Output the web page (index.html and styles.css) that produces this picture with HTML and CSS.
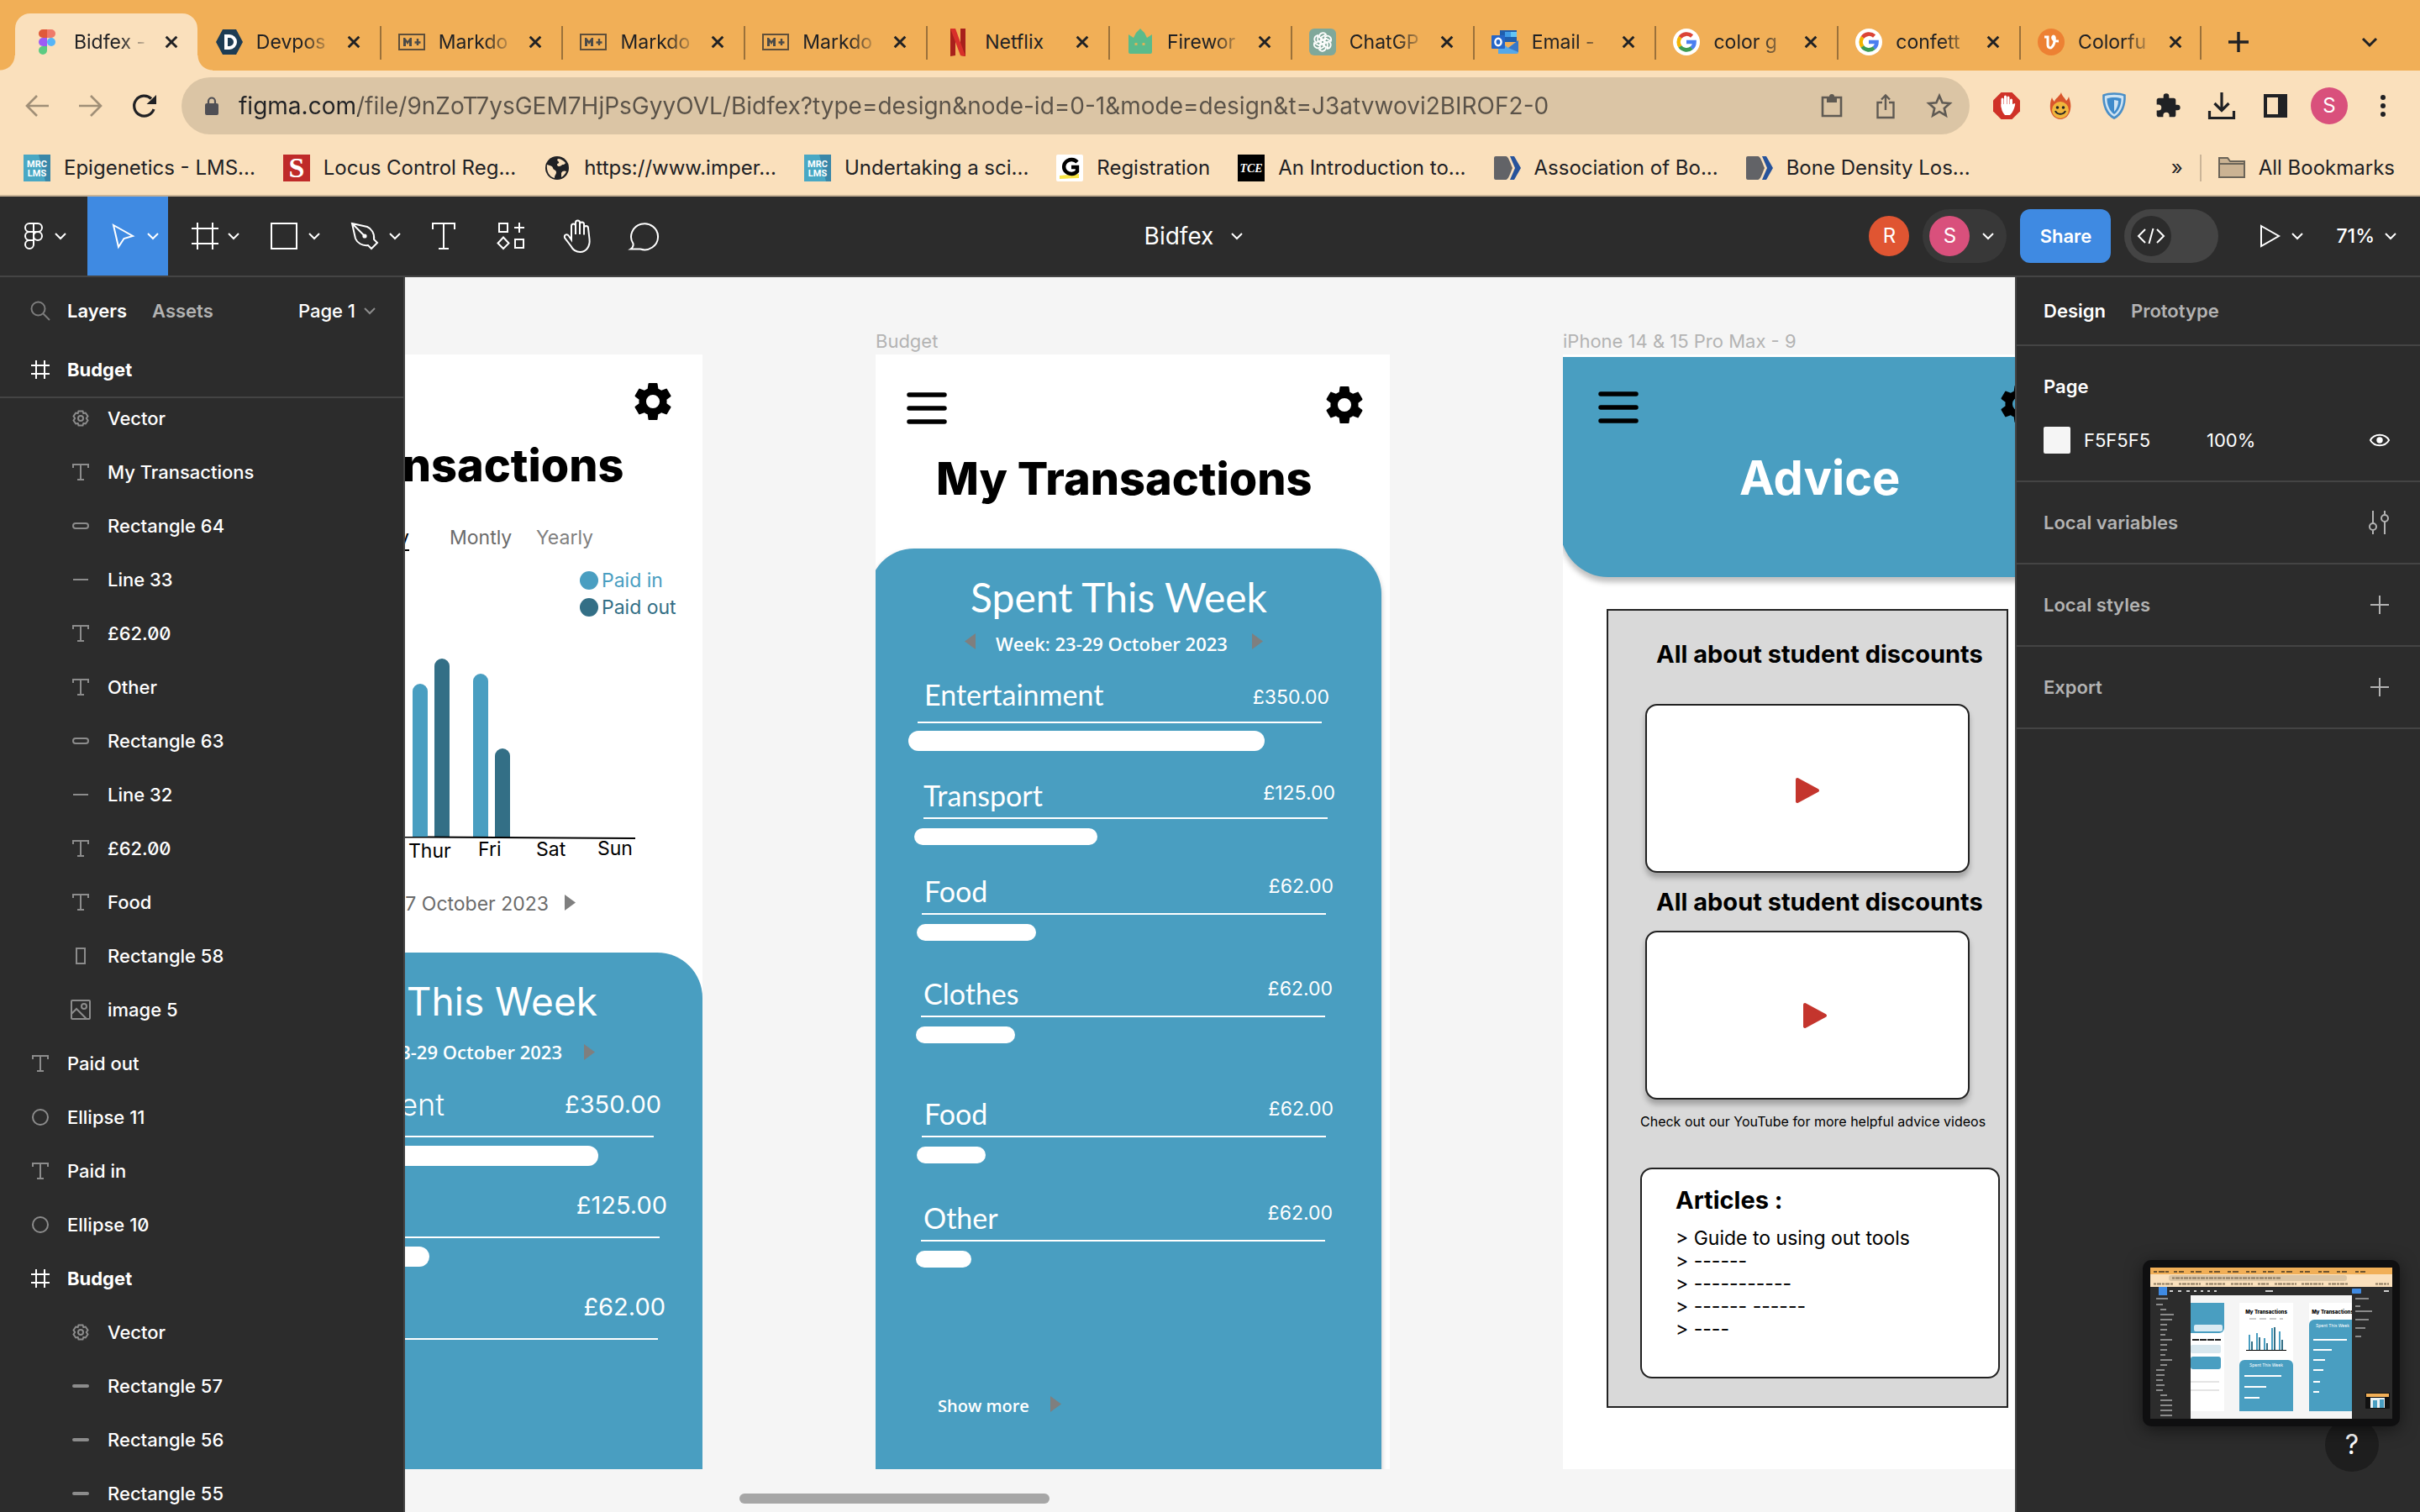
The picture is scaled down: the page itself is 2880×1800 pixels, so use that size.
FILE: index.html
```html
<!DOCTYPE html>
<html lang="en">
<head>
<meta charset="utf-8">
<title>Bidfex - Figma</title>
<link rel="stylesheet" href="styles.css">
</head>
<body>

<svg class="sprite" aria-hidden="true">
  <symbol id="chev" viewBox="0 0 16 16"><path d="M2 5l6 6 6-6" fill="none" stroke="currentColor" stroke-width="2"/></symbol>
  <symbol id="close" viewBox="0 0 20 20"><path d="M3 3l14 14M17 3L3 17" fill="none" stroke="currentColor" stroke-width="3.2"/></symbol>
  <symbol id="md" viewBox="0 0 32 32"><rect x="1" y="7" width="30" height="18" fill="none" stroke="#5f4f3a" stroke-width="2"/><path d="M6 21V11h2l3 4 3-4h2v10h-3v-5l-2 3-2-3v5z" fill="#4a4a48"/><path d="M23 12v8M19.500 16.500h7" stroke="#4a4a48" stroke-width="2.400" fill="none"/></symbol>
  <symbol id="google" viewBox="0 0 32 32"><circle cx="16" cy="16" r="16" fill="#fff"/><path d="M8.500 10.500A9.500 9.500 0 0 1 22.600 9" fill="none" stroke="#db4437" stroke-width="4.600"/><path d="M8.600 10.300a9.500 9.500 0 0 0 0 11.400" fill="none" stroke="#f4b400" stroke-width="4.600"/><path d="M8.400 21.500a9.500 9.500 0 0 0 14 1.500" fill="none" stroke="#3f9c53" stroke-width="4.600"/><path d="M16 16h9.500c0 3-1.200 5.500-3.200 7.200" fill="none" stroke="#4c7ff0" stroke-width="4.600"/></symbol>
  <symbol id="mrc" viewBox="0 0 32 32"><rect width="32" height="32" fill="#49a8c4"/><path d="M18 0h14v32h-6z" fill="#3a87a8"/><text x="16" y="15" text-anchor="middle" class="mrc-text">MRC</text><text x="16" y="26" text-anchor="middle" class="mrc-text">LMS</text></symbol>
  <symbol id="tag" viewBox="0 0 32 32"><path d="M2 2h12c3 0 5 7 8 14-3 7-5 14-8 14H2a2 2 0 0 1-2-2V4a2 2 0 0 1 2-2z" fill="#626367"/><path d="M19 2h5l8 14-8 14h-5l6-14z" fill="#27539b"/></symbol>
  <symbol id="gear" viewBox="2 2 20 20"><path d="M19.140 12.940c.04-.3.060-.61.060-.94 0-.32-.02-.64-.07-.94l2.030-1.580a.49.49 0 0 0 .12-.61l-1.920-3.320a.49.49 0 0 0-.59-.22l-2.390.96c-.5-.38-1.030-.7-1.620-.94l-.36-2.540A.48.48 0 0 0 13.920 2.400h-3.840c-.24 0-.43.17-.47.41l-.36 2.540c-.59.24-1.130.57-1.620.94l-2.390-.96c-.22-.08-.47 0-.59.22L2.740 8.870c-.12.21-.08.47.12.61l2.030 1.580c-.05.3-.09.63-.09.94s.02.64.07.94l-2.030 1.580a.49.49 0 0 0-.12.61l1.920 3.320c.12.22.37.29.59.22l2.390-.96c.5.38 1.030.7 1.620.94l.36 2.540c.05.24.24.41.48.41h3.840c.24 0 .44-.17.47-.41l.36-2.540c.59-.24 1.130-.56 1.620-.94l2.390.96c.22.08.47 0 .59-.22l1.920-3.320c.12-.22.07-.47-.12-.61zM12 15.500a3.500 3.500 0 1 1 0-7 3.500 3.500 0 0 1 0 7z"/></symbol>
  <symbol id="burger" viewBox="0 0 48 38"><path d="M3 3h42M3 19h42M3 35h42" stroke="currentColor" stroke-width="5.500" stroke-linecap="round"/></symbol>
  <symbol id="tri" viewBox="0 0 13 19"><path d="M0 0l13 9.500L0 19z" fill="currentColor"/></symbol>
  <symbol id="play" viewBox="0 0 30 32"><path d="M3 3l24 13L3 29z" fill="#c4352d" stroke="#c4352d" stroke-width="4" stroke-linejoin="round"/></symbol>
  <symbol id="l-frame" viewBox="0 0 24 24"><path d="M7 1v22M17 1v22M1 7h22M1 17h22" fill="none" stroke="currentColor" stroke-width="2"/></symbol>
  <symbol id="l-text" viewBox="0 0 24 24"><path d="M3 7V3h18v4M12 3v18M8 21h8" fill="none" stroke="currentColor" stroke-width="2"/></symbol>
  <symbol id="l-vector" viewBox="0 0 24 24"><path d="M9.500 3.500h5l.8 2.500 2.500-.5 2.700 4-1.700 2.500 1.700 2.500-2.700 4-2.500-.5-.8 2.500h-5L8.700 18l-2.500.5-2.700-4L5.200 12 3.500 9.500l2.700-4 2.500.5z" fill="none" stroke="currentColor" stroke-width="2"/><circle cx="12" cy="12" r="3" fill="none" stroke="currentColor" stroke-width="2"/></symbol>
  <symbol id="l-pill" viewBox="0 0 24 24"><rect x="3" y="9" width="18" height="6" rx="3" fill="none" stroke="currentColor" stroke-width="2"/></symbol>
  <symbol id="l-thin" viewBox="0 0 24 24"><rect x="2" y="10" width="20" height="4" rx="2" fill="currentColor"/></symbol>
  <symbol id="l-line" viewBox="0 0 24 24"><path d="M3 12h18" stroke="currentColor" stroke-width="2"/></symbol>
  <symbol id="l-rect" viewBox="0 0 24 24"><rect x="7" y="3" width="10" height="18" fill="none" stroke="currentColor" stroke-width="2"/></symbol>
  <symbol id="l-image" viewBox="0 0 24 24"><rect x="1" y="1" width="22" height="22" rx="1" fill="none" stroke="currentColor" stroke-width="2"/><circle cx="16" cy="8" r="3" fill="none" stroke="currentColor" stroke-width="2"/><path d="M1 17l6-6 12 12" fill="none" stroke="currentColor" stroke-width="2"/></symbol>
  <symbol id="l-ellipse" viewBox="0 0 24 24"><circle cx="12" cy="12" r="9" fill="none" stroke="currentColor" stroke-width="2"/></symbol>
  <symbol id="plus" viewBox="0 0 24 24"><path d="M12 1v22M1 12h22" fill="none" stroke="currentColor" stroke-width="2"/></symbol>
</svg>

<header class="browser">
  <div class="tabstrip">
    <ul class="tabs">
      <li class="tab tab--active">
        <svg class="favicon" viewBox="0 0 32 32"><path d="M16 1h-5a5 5 0 0 0 0 10h5z" fill="#e0593a"/><path d="M16 1h5a5 5 0 0 1 0 10h-5z" fill="#ef7a6a"/><path d="M16 11h-5a5 5 0 0 0 0 10h5z" fill="#9d5cf5"/><circle cx="21" cy="16" r="5" fill="#55b5f8"/><path d="M16 21h-5a5 5 0 1 0 5 5z" fill="#5bcb82"/></svg>
        <a class="tab-label" href="#">Bidfex -</a><button class="tab-close" aria-label="Close tab"><svg><use href="#close"/></svg></button></li>
      <li class="tab tab--first">
        <svg class="favicon" viewBox="0 0 32 32"><path d="M8 1h16l8 15-8 15H8L0 16z" fill="#1d3c54"/><path d="M12 9h4a7 7 0 0 1 0 14h-4z" fill="none" stroke="#fff" stroke-width="4"/></svg>
        <a class="tab-label" href="#">Devpos</a><button class="tab-close" aria-label="Close tab"><svg><use href="#close"/></svg></button></li>
      <li class="tab"><svg class="favicon"><use href="#md"/></svg><a class="tab-label" href="#">Markdo</a><button class="tab-close" aria-label="Close tab"><svg><use href="#close"/></svg></button></li>
      <li class="tab"><svg class="favicon"><use href="#md"/></svg><a class="tab-label" href="#">Markdo</a><button class="tab-close" aria-label="Close tab"><svg><use href="#close"/></svg></button></li>
      <li class="tab"><svg class="favicon"><use href="#md"/></svg><a class="tab-label" href="#">Markdo</a><button class="tab-close" aria-label="Close tab"><svg><use href="#close"/></svg></button></li>
      <li class="tab">
        <svg class="favicon" viewBox="0 0 32 32"><path d="M7 0h6v32l-6 1zM19 0h6v33l-6-1z" fill="#a8201c"/><path d="M7 0h6l12 33-6-1z" fill="#d8302a"/></svg>
        <a class="tab-label tab-label--whole" href="#">Netflix</a><button class="tab-close" aria-label="Close tab"><svg><use href="#close"/></svg></button></li>
      <li class="tab">
        <svg class="favicon" viewBox="0 0 32 32"><path d="M2 7l6 4 3-6 5-5 5 5 3 6 6-4v21a2 2 0 0 1-2 2H4a2 2 0 0 1-2-2z" fill="#5abb8b"/><path d="M11 17v3M20 17v3" stroke="#d9b45a" stroke-width="3"/></svg>
        <a class="tab-label" href="#">Firewor</a><button class="tab-close" aria-label="Close tab"><svg><use href="#close"/></svg></button></li>
      <li class="tab">
        <svg class="favicon" viewBox="0 0 32 32"><rect width="32" height="32" rx="6" fill="#80a89a"/><g fill="none" stroke="#fff" stroke-width="1.800"><path id="petal" d="M16 12.500l-4-2.300V9a4.500 4.500 0 0 1 8-2l-6 3.500v7"/><use href="#petal" transform="rotate(60 16 16)"/><use href="#petal" transform="rotate(120 16 16)"/><use href="#petal" transform="rotate(180 16 16)"/><use href="#petal" transform="rotate(240 16 16)"/><use href="#petal" transform="rotate(300 16 16)"/></g></svg>
        <a class="tab-label" href="#">ChatGP</a><button class="tab-close" aria-label="Close tab"><svg><use href="#close"/></svg></button></li>
      <li class="tab">
        <svg class="favicon" viewBox="0 0 32 32"><path d="M10 2h20v14H10z" fill="#1f5fae"/><path d="M16 4h7v6h-7z" fill="#3f9be6"/><path d="M23 4h7v6h-7z" fill="#62c4f5"/><path d="M8 14l12 9 12-9v14a2 2 0 0 1-2 2H8z" fill="#55a8ea"/><path d="M20 23l12-9v14z" fill="#3878c8"/><rect y="8" width="16" height="16" rx="1" fill="#2566c8"/><ellipse cx="8" cy="16" rx="3.600" ry="4.200" fill="none" stroke="#fff" stroke-width="2.400"/></svg>
        <a class="tab-label" href="#">Email -</a><button class="tab-close" aria-label="Close tab"><svg><use href="#close"/></svg></button></li>
      <li class="tab"><svg class="favicon"><use href="#google"/></svg><a class="tab-label" href="#">color g</a><button class="tab-close" aria-label="Close tab"><svg><use href="#close"/></svg></button></li>
      <li class="tab"><svg class="favicon"><use href="#google"/></svg><a class="tab-label" href="#">confett</a><button class="tab-close" aria-label="Close tab"><svg><use href="#close"/></svg></button></li>
      <li class="tab tab--last">
        <svg class="favicon" viewBox="0 0 32 32"><circle cx="16" cy="16" r="16" fill="#ed8133"/><path d="M8 10h4v9c0 4 3 5 5 3 4-4 4-13 2-13s-3 6 6 6" fill="none" stroke="#fff" stroke-width="3"/></svg>
        <a class="tab-label" href="#">Colorfu</a><button class="tab-close" aria-label="Close tab"><svg><use href="#close"/></svg></button></li>
    </ul>
    <div class="tabstrip-tools">
      <button class="strip-btn" aria-label="New tab"><svg viewBox="0 0 24 24"><path d="M12 0v24M0 12h24" stroke="currentColor" stroke-width="3.400"/></svg></button>
      <button class="strip-btn" aria-label="Search tabs"><svg viewBox="0 0 24 24"><path d="M4 8l8 8 8-8" fill="none" stroke="currentColor" stroke-width="3"/></svg></button>
    </div>
  </div>

  <div class="navbar">
    <button class="nav-btn nav-btn--off" aria-label="Back"><svg viewBox="0 0 32 32"><path d="M30 16H5M16 4L4 16l12 12" fill="none" stroke="currentColor" stroke-width="2.600"/></svg></button>
    <button class="nav-btn nav-btn--off" aria-label="Forward"><svg viewBox="0 0 32 32"><path d="M2 16h25M16 4l12 12-12 12" fill="none" stroke="currentColor" stroke-width="2.600"/></svg></button>
    <button class="nav-btn" aria-label="Reload"><svg viewBox="0 0 32 32"><path d="M27 20a12 12 0 1 1-3-12.500" fill="none" stroke="currentColor" stroke-width="3.200"/><path d="M30 3v11H18.500z" fill="currentColor"/></svg></button>
    <div class="omnibox">
      <svg class="lock" viewBox="0 0 16 22"><rect y="8" width="16" height="14" rx="2" fill="#4f4f54"/><path d="M4 9V5.500a4 4 0 0 1 8 0V9" fill="none" stroke="#4f4f54" stroke-width="2.200"/></svg>
      <input class="url" type="text" aria-label="Address" value="figma.com/file/9nZoT7ysGEM7HjPsGyyOVL/Bidfex?type=design&amp;node-id=0-1&amp;mode=design&amp;t=J3atvwovi2BIROF2-0">
      <button class="omni-btn" aria-label="Clipboard"><svg viewBox="0 0 32 32"><path d="M5 6h22v22H5z" fill="none" stroke="currentColor" stroke-width="2.600"/><path d="M10 5h3a3 3 0 0 1 6 0h3v7H10z" fill="currentColor"/></svg></button>
      <button class="omni-btn" aria-label="Share"><svg viewBox="0 0 32 32"><path d="M12 12H6.500v18h19V12H20M16 21V4M11 8.500l5-5 5 5" fill="none" stroke="currentColor" stroke-width="2.400"/></svg></button>
      <button class="omni-btn" aria-label="Bookmark"><svg viewBox="0 0 32 32"><path d="M16 4l3.600 8.200 8.900.8-6.700 5.900 2 8.700L16 23l-7.800 4.600 2-8.700L3.500 13l8.900-.8z" fill="none" stroke="currentColor" stroke-width="2.600"/></svg></button>
    </div>
    <div class="extensions">
      <button class="nav-btn" aria-label="AdBlock"><svg viewBox="0 0 32 32"><path d="M9.500 0h13L32 9.500v13L22.500 32h-13L0 22.500v-13z" fill="#cf3127"/><path d="M11 17V8M14.500 16V5M18 16V6M21.500 17V9" stroke="#fff" stroke-width="3" stroke-linecap="round"/><path d="M9.500 14h13.500l3-1c1 1-2 11-6 14h-6c-3-3-4.500-7-4.500-13z" fill="#fff"/></svg></button>
      <button class="nav-btn" aria-label="Flame"><svg viewBox="0 0 32 32"><path d="M17 0c1 5 5 7 6 10 1-1 2-2 3-5 2 6 3 10 2 15-1 7-6 12-12 12S5 27 4 20c-.500-5 0-10 2-14 1 3 2 4 3 5 1-4 6-6 8-11z" fill="#d9562c"/><circle cx="16" cy="21" r="10" fill="#f0b63c"/><circle cx="12.500" cy="18" r="1.800" fill="#222"/><circle cx="19.500" cy="18" r="1.800" fill="#222"/><path d="M10 22c2 5 10 5 12 0" fill="none" stroke="#222" stroke-width="2"/></svg></button>
      <button class="nav-btn" aria-label="Shield"><svg viewBox="0 0 32 32"><path d="M16 1.500c5 0 9 .5 12.500 2C29 15 25 26 16 30.500 7 26 3 15 3.500 3.500 7 2 11 1.500 16 1.500z" fill="#cfe4f3" stroke="#4a8fc7" stroke-width="2.600"/><path d="M16 6c3 0 6 .4 8.500 1.200C24.500 15 21.500 22 16 26 10.500 22 7.500 15 7.500 7.200 10 6.400 13 6 16 6z" fill="#3f8bcb"/><path d="M16 9l5 1c0 5-2 10-5 13z" fill="#cfe4f3"/></svg></button>
      <button class="nav-btn" aria-label="Extensions"><svg viewBox="0 0 24 24"><path d="M20.500 11H19V7a2 2 0 0 0-2-2h-4V3.500a2.500 2.500 0 0 0-5 0V5H4a2 2 0 0 0-2 2v3.800h1.500a2.700 2.700 0 0 1 0 5.400H2V20c0 1.100.9 2 2 2h3.800v-1.500a2.700 2.700 0 0 1 5.400 0V22H17a2 2 0 0 0 2-2v-4h1.500a2.500 2.500 0 0 0 0-5z" fill="currentColor"/></svg></button>
      <button class="nav-btn" aria-label="Downloads"><svg viewBox="0 0 32 32"><path d="M16 0v20M7.500 13l8.500 8.500L24.500 13M1.500 22v8.500h29V22" fill="none" stroke="currentColor" stroke-width="3.200"/></svg></button>
      <button class="nav-btn" aria-label="Side panel"><svg viewBox="0 0 32 32"><path d="M2 2h28v28H2zM6 6v20h13V6z" fill="currentColor" fill-rule="evenodd"/></svg></button>
      <button class="profile" aria-label="Profile">S</button>
      <button class="nav-btn" aria-label="Menu"><svg viewBox="0 0 32 32"><circle cx="16" cy="6" r="3" fill="currentColor"/><circle cx="16" cy="16" r="3" fill="currentColor"/><circle cx="16" cy="26" r="3" fill="currentColor"/></svg></button>
    </div>
  </div>

  <nav class="bookmarks">
    <a class="bookmark" href="#"><svg><use href="#mrc"/></svg>Epigenetics - LMS...</a>
    <a class="bookmark" href="#"><svg viewBox="0 0 32 32"><rect width="32" height="32" fill="#bf2a29"/><text x="16" y="27" text-anchor="middle" class="serif-s">S</text></svg>Locus Control Reg...</a>
    <a class="bookmark" href="#"><svg viewBox="0 0 32 32"><circle cx="16" cy="16" r="14" fill="#202124"/><path d="M4 12c5 2 6 1 7 4s4 2 4 5-2 3-2 7c-6-1-10-8-9-16zM17 5c3 0 7 2 9 5-2 3-3 1-5 3s-5 1-5-1 3-1 2-3-3-2-1-4zM21 22c1-3 4-3 6-2-1 3-4 6-6 7z" fill="#f9e0bd"/></svg>https://www.imper...</a>
    <a class="bookmark" href="#"><svg><use href="#mrc"/></svg>Undertaking a sci...</a>
    <a class="bookmark" href="#"><svg viewBox="0 0 32 32"><rect width="32" height="32" rx="2" fill="#fff"/><path d="M4 25l23-2v5L4 29z" fill="#f7e545"/><path d="M25 9a9 8.500 0 1 0 0 11v-5h-7" fill="none" stroke="#000" stroke-width="4.400"/></svg>Registration</a>
    <a class="bookmark" href="#"><svg viewBox="0 0 32 32"><rect width="32" height="32" fill="#000"/><text x="16" y="21" text-anchor="middle" class="tce-text">TCE</text></svg>An Introduction to...</a>
    <a class="bookmark" href="#"><svg><use href="#tag"/></svg>Association of Bo...</a>
    <a class="bookmark" href="#"><svg><use href="#tag"/></svg>Bone Density Los...</a>
    <div class="bookmarks-end">
      <button class="more" aria-label="More bookmarks">»</button>
      <a class="bookmark all" href="#"><svg viewBox="0 0 32 32"><path d="M1 27V4h10l3 4h17v19z" fill="#cbb393" stroke="#6b6458" stroke-width="2"/><path d="M1 11h30" stroke="#6b6458" stroke-width="2"/></svg>All Bookmarks</a>
    </div>
  </nav>
</header>

<div class="appbar">
  <div class="tools">
    <button class="tool tool--menu" aria-label="Main menu"><svg class="tool-icon" viewBox="0 0 32 32"><path d="M16 1h-5a5 5 0 0 0 0 10h10a5 5 0 0 0 0-10h-5zv25a5 5 0 1 1-5-5h5M11 11a5 5 0 0 0 0 10h5" fill="none" stroke="currentColor" stroke-width="2"/><circle cx="21" cy="16" r="5" fill="none" stroke="currentColor" stroke-width="2"/></svg><svg class="chev"><use href="#chev"/></svg></button>
    <button class="tool tool--on" aria-label="Move"><svg class="tool-icon" viewBox="0 0 32 32"><path d="M3 3l23 13-10.500 3L9 29z" fill="none" stroke="currentColor" stroke-width="2"/></svg><svg class="chev"><use href="#chev"/></svg></button>
    <button class="tool" aria-label="Frame"><svg class="tool-icon" viewBox="0 0 32 32"><path d="M7 0v32M25 0v32M0 7h32M0 25h32" fill="none" stroke="currentColor" stroke-width="2"/></svg><svg class="chev"><use href="#chev"/></svg></button>
    <button class="tool" aria-label="Rectangle"><svg class="tool-icon" viewBox="0 0 32 32"><path d="M-1 1h30v30H-1z" fill="none" stroke="currentColor" stroke-width="2"/></svg><svg class="chev"><use href="#chev"/></svg></button>
    <button class="tool" aria-label="Pen"><svg class="tool-icon" viewBox="0 0 32 32"><path d="M-1 1l18 4c5 2 9 8 8 15l4 4-7 7-4-4c-7 1-13-3-15-8zM-1 1l14 14" fill="none" stroke="currentColor" stroke-width="2"/><circle cx="14" cy="16" r="2.600" fill="currentColor"/></svg><svg class="chev"><use href="#chev"/></svg></button>
    <button class="tool tool--single" aria-label="Text"><svg class="tool-icon" viewBox="0 0 32 32"><path d="M3 8V1h26v7M16 1v30M10 31h12" fill="none" stroke="currentColor" stroke-width="2"/></svg></button>
    <button class="tool tool--single" aria-label="Resources"><svg class="tool-icon" viewBox="0 0 32 32"><path d="M2 1h10v10H2zM21 20h10v10H21zM26 0v12M20 6h12M7 17.500l6.500 7-6.500 6.500-6.500-6.500z" fill="none" stroke="currentColor" stroke-width="2"/></svg></button>
    <button class="tool tool--single" aria-label="Hand"><svg class="tool-icon tool-icon--big" viewBox="0 0 40 40"><path d="M12 21V8a2.500 2.500 0 0 1 5 0v10V4a2.500 2.500 0 0 1 5 0v14V6a2.500 2.500 0 0 1 5 0v12.500-8a2.500 2.500 0 0 1 5 0l1.500 13c1 9-4 15.500-11 15.500-6 0-9-3-11-7L4 22c-1-4 3-5 5-2l3 4.500z" fill="none" stroke="currentColor" stroke-width="2"/></svg></button>
    <button class="tool tool--single" aria-label="Comment"><svg class="tool-icon tool-icon--big" viewBox="0 0 40 40"><path d="M2.500 35.500c3-2 3.500-4 3-6.500A16 15.500 0 1 1 14 35.500z" fill="none" stroke="currentColor" stroke-width="2"/></svg></button>
  </div>
  <button class="file-name">Bidfex<svg class="chev"><use href="#chev"/></svg></button>
  <div class="app-actions">
    <span class="avatar avatar--r">R</span>
    <button class="me"><span class="avatar avatar--s">S</span><svg class="chev"><use href="#chev"/></svg></button>
    <button class="share">Share</button>
    <label class="devmode"><input type="checkbox" role="switch" aria-label="Dev Mode"><span class="knob"><svg viewBox="0 0 32 24"><path d="M9 4l-8 8 8 8M23 4l8 8-8 8M18.500 3l-5 18" fill="none" stroke="currentColor" stroke-width="2"/></svg></span></label>
    <button class="present" aria-label="Present"><svg class="play-icon" viewBox="0 0 24 28"><path d="M1 2l21 12L1 26z" fill="none" stroke="currentColor" stroke-width="2"/></svg><svg class="chev"><use href="#chev"/></svg></button>
    <button class="zoom">71%<svg class="chev"><use href="#chev"/></svg></button>
  </div>
</div>

<main class="workspace">
  <aside class="layers">
    <div class="layers-head">
      <button class="icon-btn" aria-label="Search layers"><svg viewBox="0 0 24 24"><circle cx="9.500" cy="9.500" r="8" fill="none" stroke="currentColor" stroke-width="2"/><path d="M15.500 15.500L23 23" stroke="currentColor" stroke-width="2"/></svg></button>
      <button class="ptab ptab--on">Layers</button>
      <button class="ptab">Assets</button>
      <button class="page-pick">Page 1<svg class="chev"><use href="#chev"/></svg></button>
    </div>
    <div class="layer layer--frame layer--sticky"><svg><use href="#l-frame"/></svg>Budget</div>
    <div class="layer-scroll">
      <ul class="layer-list">
        <li class="layer layer--child"><svg><use href="#l-vector"/></svg>Vector</li>
        <li class="layer layer--child"><svg><use href="#l-text"/></svg>My Transactions</li>
        <li class="layer layer--child"><svg><use href="#l-pill"/></svg>Rectangle 64</li>
        <li class="layer layer--child"><svg><use href="#l-line"/></svg>Line 33</li>
        <li class="layer layer--child"><svg><use href="#l-text"/></svg>£62.00</li>
        <li class="layer layer--child"><svg><use href="#l-text"/></svg>Other</li>
        <li class="layer layer--child"><svg><use href="#l-pill"/></svg>Rectangle 63</li>
        <li class="layer layer--child"><svg><use href="#l-line"/></svg>Line 32</li>
        <li class="layer layer--child"><svg><use href="#l-text"/></svg>£62.00</li>
        <li class="layer layer--child"><svg><use href="#l-text"/></svg>Food</li>
        <li class="layer layer--child"><svg><use href="#l-rect"/></svg>Rectangle 58</li>
        <li class="layer layer--child"><svg><use href="#l-image"/></svg>image 5</li>
        <li class="layer"><svg><use href="#l-text"/></svg>Paid out</li>
        <li class="layer"><svg><use href="#l-ellipse"/></svg>Ellipse 11</li>
        <li class="layer"><svg><use href="#l-text"/></svg>Paid in</li>
        <li class="layer"><svg><use href="#l-ellipse"/></svg>Ellipse 10</li>
        <li class="layer layer--frame"><svg><use href="#l-frame"/></svg>Budget</li>
        <li class="layer layer--child"><svg><use href="#l-vector"/></svg>Vector</li>
        <li class="layer layer--child"><svg><use href="#l-thin"/></svg>Rectangle 57</li>
        <li class="layer layer--child"><svg><use href="#l-thin"/></svg>Rectangle 56</li>
        <li class="layer layer--child"><svg><use href="#l-thin"/></svg>Rectangle 55</li>
      </ul>
    </div>
  </aside>

  <section class="canvas" aria-label="Canvas">
    <article class="frame" style="left:-258px;top:92px">
      <svg class="node gear" style="left:530px;top:33px"><use href="#gear"/></svg>
      <h2 class="node title" style="left:71px;top:98px">My Transactions</h2>
      <span class="node t23 underlined" style="right:349px;top:204px">Weekly</span>
      <span class="node t23 grey-dark" style="left:311px;top:204px">Montly</span>
      <span class="node t23 grey" style="left:414px;top:204px">Yearly</span>
      <ul class="node legend" style="left:466px;top:253px">
        <li class="legend-in">Paid in</li>
        <li class="legend-out">Paid out</li>
      </ul>
      <div class="node chart" style="left:267px;top:362px">
        <span class="col" style="height:183px"></span><span class="col col--out" style="height:213px"></span>
        <span class="col col--next" style="height:195px"></span><span class="col col--out" style="height:106px"></span>
      </div>
      <svg class="node axis" style="left:0;top:572px" viewBox="0 0 532 6"><path d="M0 1l532 3" stroke="#000" stroke-width="2"/></svg>
      <span class="node t23" style="left:262px;top:577px">Thur</span>
      <span class="node t23" style="left:345px;top:575px">Fri</span>
      <span class="node t23" style="left:414px;top:575px">Sat</span>
      <span class="node t23" style="left:487px;top:574px">Sun</span>
      <span class="node t23 grey-dark" style="right:183px;top:640px">Week: 21-27 October 2023</span>
      <svg class="node tri" style="left:448px;top:643px"><use href="#tri"/></svg>

      <div class="node panel panel--flush" style="top:712px">
        <h3 class="node panel-title--inter" style="right:125px;top:30px">Spent This Week</h3>
        <span class="node week" style="right:167px;top:104px">Week: 23-29 October 2023</span>
        <svg class="node tri" style="left:471px;top:109px"><use href="#tri"/></svg>
        <div class="node wide-row" style="right:58px;top:163px"><p>Entertainment <b>£350.00</b></p><hr><span class="fill fill--big" style="width:424px"></span></div>
        <div class="node wide-row" style="right:51px;top:283px"><p>Transport <b>£125.00</b></p><hr><span class="fill" style="width:216px"></span></div>
        <div class="node wide-row" style="right:53px;top:404px"><p>Food <b>£62.00</b></p><hr></div>
      </div>
    </article>

    <span class="frame-name" style="left:560px;top:62px">Budget</span>
    <article class="frame" style="left:560px;top:92px">
      <svg class="node burger" style="left:37px;top:45px"><use href="#burger"/></svg>
      <svg class="node gear" style="left:535px;top:37px"><use href="#gear"/></svg>
      <h2 class="node title" style="left:72px;top:114px">My Transactions</h2>
      <div class="node panel" style="left:-8px;top:231px">
        <h3 class="node panel-title" style="left:121px;top:30px">Spent This Week</h3>
        <svg class="node tri tri--left" style="left:114px;top:101px"><use href="#tri"/></svg>
        <span class="node week" style="left:151px;top:99px">Week: 23-29 October 2023</span>
        <svg class="node tri" style="left:456px;top:101px"><use href="#tri"/></svg>
        <ul class="spends">
          <li class="node spend spend--high" style="left:58px;top:150px"><p>Entertainment</p><b>£350.00</b><hr><span class="fill fill--big" style="width:424px"></span></li>
          <li class="node spend spend--second" style="left:65px;top:264px"><p>Transport</p><b>£125.00</b><hr><span class="fill" style="width:218px"></span></li>
          <li class="node spend" style="left:63px;top:378px"><p>Food</p><b>£62.00</b><hr><span class="fill" style="width:142px"></span></li>
          <li class="node spend" style="left:62px;top:500px"><p>Clothes</p><b>£62.00</b><hr><span class="fill" style="width:118px"></span></li>
          <li class="node spend" style="left:63px;top:643px"><p>Food</p><b>£62.00</b><hr><span class="fill" style="width:82px"></span></li>
          <li class="node spend" style="left:62px;top:767px"><p>Other</p><b>£62.00</b><hr><span class="fill" style="width:66px"></span></li>
        </ul>
        <span class="node week week--small" style="left:82px;top:1007px">Show more</span>
        <svg class="node tri" style="left:216px;top:1009px"><use href="#tri"/></svg>
      </div>
    </article>

    <span class="frame-name" style="left:1378px;top:62px">iPhone 14 &amp; 15 Pro Max - 9</span>
    <article class="frame" style="left:1378px;top:92px">
      <div class="node hero" style="left:-3px;top:3px"></div>
      <svg class="node burger" style="left:42px;top:44px"><use href="#burger"/></svg>
      <svg class="node gear" style="left:520px;top:36px"><use href="#gear"/></svg>
      <h2 class="node title title--light" style="left:210px;top:113px">Advice</h2>
      <div class="node board" style="left:52px;top:303px">
        <h4 class="node t29" style="left:57px;top:35px">All about student discounts</h4>
        <button class="node video" style="left:44px;top:111px" aria-label="Play video"><svg class="play"><use href="#play"/></svg></button>
        <h4 class="node t29" style="left:57px;top:330px">All about student discounts</h4>
        <button class="node video video--b" style="left:44px;top:381px" aria-label="Play video"><svg class="play"><use href="#play"/></svg></button>
        <p class="node t16" style="left:38px;top:598px">Check out our YouTube for more helpful advice videos</p>
        <div class="node articles" style="left:38px;top:663px">
          <h4 class="t29">Articles :</h4>
          <ul><li>&gt; Guide to using out tools</li><li>&gt; ------</li><li>&gt; -----------</li><li>&gt; ------ ------</li><li>&gt; ----</li></ul>
        </div>
      </div>
    </article>
    <div class="scroll-thumb"></div>
  </section>

  <aside class="inspector">
    <div class="insp-tabs"><button class="ptab ptab--on">Design</button><button class="ptab">Prototype</button></div>
    <section class="insp-page">
      <h3>Page</h3>
      <div class="fill-row">
        <button class="swatch" aria-label="Page colour"></button>
        <input class="hex" type="text" aria-label="Colour" value="F5F5F5">
        <input class="pct" type="text" aria-label="Opacity" value="100%">
        <button class="icon-btn icon-btn--white" aria-label="Toggle visibility"><svg viewBox="0 0 26 26"><path d="M1 13c5-9 19-9 24 0-5 9-19 9-24 0z" fill="none" stroke="currentColor" stroke-width="2"/><circle cx="13" cy="13" r="4" fill="currentColor"/></svg></button>
      </div>
    </section>
    <section class="insp-row"><h3>Local variables</h3><button class="icon-btn" aria-label="Open variables"><svg class="sliders" viewBox="0 0 26 28"><path d="M6 0v15M6 24v4M20 0v4M20 13v15" stroke="currentColor" stroke-width="2"/><circle cx="6" cy="19" r="4" fill="none" stroke="currentColor" stroke-width="2"/><circle cx="20" cy="9" r="4" fill="none" stroke="currentColor" stroke-width="2"/></svg></button></section>
    <section class="insp-row"><h3>Local styles</h3><button class="icon-btn" aria-label="Add style"><svg><use href="#plus"/></svg></button></section>
    <section class="insp-row"><h3>Export</h3><button class="icon-btn" aria-label="Add export"><svg><use href="#plus"/></svg></button></section>
  </aside>
</main>

<button class="help" aria-label="Help">?</button>
<div class="preview">
  <svg viewBox="0 0 288 180">
    <rect width="288" height="180" fill="#f5f5f5"/>
    <rect width="288" height="8" fill="#f1af57"/><rect y="8" width="288" height="15" fill="#fae0bc"/><rect x="22" y="9" width="212" height="7" rx="3" fill="#dbc5a5"/>
    <path d="M4 5h18M28 5h12M48 5h14M70 5h14M92 5h14M114 5h12M134 5h14M156 5h14M178 5h12M200 5h14M222 5h12M244 5h12" stroke="#6f5530" stroke-width="2" stroke-dasharray="4 2 7 1"/>
    <path d="M26 12.500h130M4 19.500h24M34 19.500h26M66 19.500h24M96 19.500h26M128 19.500h14M148 19.500h26M180 19.500h26M212 19.500h24M268 19.500h16" stroke="#8b7a60" stroke-width="2" stroke-dasharray="3 1 5 1"/>
    <rect y="23" width="288" height="10" fill="#2c2c2c"/><rect x="10" y="23" width="10" height="10" fill="#3f8ae2"/><rect x="240" y="25" width="11" height="6" rx="1" fill="#3f8ae2"/>
    <path d="M23 28h4M33 28h4M43 28h4M52 28h3M60 28h3M68 28h3M76 28h3M137 28h9M278 28h6" stroke="#cfcfcf" stroke-width="2"/>
    <rect x="48" y="42" width="40" height="129" fill="#fff"/>
    <path d="M48 42h40v30a6 6 0 0 1-6 6H48z" fill="#499ec1"/>
    <rect x="52" y="68" width="34" height="8" rx="2" fill="#d9ebf3"/><path d="M50 86h34" stroke="#222" stroke-width="2" stroke-dasharray="8 1"/>
    <rect x="48" y="92" width="36" height="10" rx="2" fill="#d8e7ee"/><rect x="48" y="106" width="36" height="15" rx="3" fill="#499ec1"/><path d="M48 136h34M48 146h34" stroke="#c9c9c9"/>
    <rect x="106" y="42" width="64" height="129" fill="#fff"/><text x="138" y="55" text-anchor="middle" class="mini-title">My Transactions</text>
    <path d="M118 61h40" stroke="#999" stroke-width="1" stroke-dasharray="8 4"/>
    <path d="M118 98V80M127 98V78M136 98V84M145 98V72M154 98V76" stroke="#499ec1" stroke-width="2"/><path d="M121 98V88M130 98V83M139 98V90M148 98V71M157 98V86" stroke="#336f86" stroke-width="2"/><path d="M114 98.500h48" stroke="#000"/>
    <path d="M106 171v-55a6 6 0 0 1 6-6h52a6 6 0 0 1 6 6v55z" fill="#499ec1"/><text x="138" y="118" text-anchor="middle" class="mini-sub">Spent This Week</text>
    <path d="M112 129h44M112 142h26M112 155h18" stroke="#fff" stroke-width="2"/>
    <rect x="189" y="42" width="51" height="129" fill="#fff"/><text x="217" y="55" text-anchor="middle" class="mini-title">My Transactions</text>
    <path d="M189 171V68a6 6 0 0 1 6-6h45v109z" fill="#499ec1"/><text x="217" y="71" text-anchor="middle" class="mini-sub">Spent This Week</text>
    <path d="M194 86h40M194 98h22M194 110h14M194 122h12M194 136h8M194 148h7" stroke="#fff" stroke-width="2"/>
    <rect y="33" width="48" height="147" fill="#2c2c2c"/><rect x="240" y="33" width="48" height="147" fill="#2c2c2c"/>
    <path d="M7 37h14M7 44h8M12 50h7M12 56h16M12 62h14M12 68h8M12 74h8M12 80h6M12 86h14M12 92h8M12 98h8M12 104h6M12 110h14M12 116h8M7 122h10M7 128h10M7 134h8M7 140h10M7 146h8M12 152h8M12 158h14M12 164h14M12 170h14M12 176h14" stroke="#a9a9a9" stroke-width="1.500"/>
    <path d="M244 37h16M244 46h6M244 52h20M244 62h16M244 72h12M244 82h7" stroke="#a9a9a9" stroke-width="1.500"/>
    <rect x="256" y="149" width="29" height="19" rx="1" fill="#111"/><rect x="257" y="150" width="27" height="4" fill="#f1af57"/><rect x="262" y="155" width="17" height="12" fill="#e9f1f4"/><rect x="265" y="158" width="5" height="9" fill="#499ec1"/><rect x="273" y="157" width="5" height="10" fill="#499ec1"/>
  </svg>
</div>

</body>
</html>
```

FILE: styles.css
```css
* { box-sizing: border-box; }

:root {
  --strip: #f1af57;
  --chrome: #fae0bc;
  --panel: #2c2c2c;
  --rule: #444444;
  --accent: #3f8ae2;
  --blue: #499ec1;
  --deep: #336f86;
}

body {
  margin: 0;
  height: 100vh;
  display: flex;
  flex-direction: column;
  overflow: hidden;
  font-family: Inter, "Liberation Sans", sans-serif;
  font-size: 22px;
  line-height: 28px;
  background: var(--panel);
}

button, input {
  font: inherit;
  color: inherit;
  background: none;
  border: 0;
  padding: 0;
  margin: 0;
}

ul { list-style: none; margin: 0; padding: 0; }
h2, h3, h4, p { margin: 0; font: inherit; }
a { color: inherit; text-decoration: none; }
svg { display: block; flex: none; overflow: visible; }
.sprite { position: absolute; width: 0; height: 0; }
.chev { width: 16px; height: 16px; }

/* Browser window */

.browser {
  flex: none;
  color: #202124;
  background: var(--chrome);
  border-bottom: 2px solid #c9b497;
}

.tabstrip {
  display: flex;
  height: 84px;
  padding: 16px 0 0 18px;
  background: var(--strip);
}

.tabs { display: flex; flex: 1; min-width: 0; }

.tab {
  position: relative;
  flex: 1 1 0;
  display: flex;
  align-items: center;
  height: 68px;
  padding: 0 22px;
  min-width: 0;
}

.tab::before,
.tab--last::after {
  content: "";
  position: absolute;
  left: 0;
  top: 15px;
  width: 2px;
  height: 40px;
  background: #9b713a;
}

.tab--last::after { left: auto; right: 0; }

.tab--first::before { display: none; }

.tab--active { background: var(--chrome); border-radius: 18px 18px 0 0; }

.tab--active::before,
.tab--active::after {
  content: "";
  position: absolute;
  top: auto;
  bottom: 0;
  width: 18px;
  height: 18px;
  background: radial-gradient(circle at 0 0, transparent 17px, var(--chrome) 18px);
}

.tab--active::before { left: -18px; }
.tab--active::after { right: -18px; background: radial-gradient(circle at 100% 0, transparent 17px, var(--chrome) 18px); }

.favicon { width: 32px; height: 32px; }

.tab-label {
  flex: 1;
  min-width: 0;
  margin: 0 15px 0 16px;
  white-space: nowrap;
  font-size: 23px;
  -webkit-mask-image: linear-gradient(90deg, #000 60%, transparent);
  mask-image: linear-gradient(90deg, #000 60%, transparent);
}

.tab-label--whole { -webkit-mask-image: none; mask-image: none; }

.tab-close svg { width: 18px; height: 18px; }

.tabstrip-tools {
  display: flex;
  flex: none;
  justify-content: space-between;
  align-items: center;
  width: 260px;
  padding: 0 36px 0 20px;
}

.strip-btn { width: 48px; height: 48px; display: grid; place-items: center; }
.strip-btn svg { width: 24px; height: 24px; }

.navbar { display: flex; align-items: center; gap: 32px; height: 84px; padding: 0 28px; }
.nav-btn { width: 32px; height: 32px; }
.nav-btn svg { width: 32px; height: 32px; }
.nav-btn--off { color: #a08f77; }

.omnibox {
  flex: 1;
  display: flex;
  align-items: center;
  gap: 32px;
  height: 68px;
  margin-left: -4px;
  padding: 0 20px 0 28px;
  border-radius: 34px;
  background: #dbc5a5;
  color: #5f5a53;
}

.lock { width: 16px; height: 22px; margin-right: -8px; }

.url {
  flex: 1;
  min-width: 0;
  font-size: 28px;
  line-height: 36px;
  color: transparent;
  background: linear-gradient(90deg, #202124 142px, #5a5248 142px);
  -webkit-background-clip: text;
  background-clip: text;
}

.omni-btn, .omni-btn svg { width: 32px; height: 32px; }

.extensions { display: flex; align-items: center; gap: 32px; margin-left: -4px; }

.profile {
  width: 44px;
  height: 44px;
  margin: 0 -6px;
  border-radius: 50%;
  background: #d9507c;
  color: #fff;
  font-size: 24px;
}

.bookmarks { display: flex; align-items: center; gap: 33px; height: 64px; padding: 0 30px 0 28px; font-size: 24px; white-space: nowrap; }
.bookmark { display: flex; align-items: center; gap: 16px; }
.bookmark svg { width: 32px; height: 32px; }
.mrc-text { font: 700 11px Roboto, sans-serif; fill: #fff; }
.serif-s { font: 700 34px "Liberation Serif", serif; fill: #fff; }
.tce-text { font: italic 700 14px "Liberation Serif", serif; fill: #fff; }
.bookmarks-end { display: flex; align-items: center; gap: 20px; margin-left: auto; }
.all { padding-left: 20px; border-left: 2px solid #cbb598; }

/* Editor top bar */

.appbar {
  flex: none;
  display: grid;
  grid-template-columns: 1fr auto 1fr;
  height: 96px;
  color: #fff;
  background: var(--panel);
  border-bottom: 2px solid var(--rule);
}

.tools { display: flex; }
.tool { display: flex; align-items: center; gap: 10px; width: 96px; padding-left: 28px; }
.tool--menu { width: 104px; padding-left: 24px; gap: 8px; }
.tool--on { background: var(--accent); }
.tool--single { width: 80px; padding: 0; justify-content: center; }
.tool-icon { width: 32px; height: 32px; }
.tool-icon--big { width: 40px; height: 40px; }

.file-name { display: flex; align-items: center; gap: 20px; padding-right: 38px; font-size: 28px; }

.app-actions { display: flex; align-items: center; justify-content: flex-end; gap: 16px; padding-right: 27px; }
.avatar { display: grid; place-items: center; width: 48px; height: 48px; border-radius: 50%; color: #fff; font-size: 24px; }
.avatar--r { background: #e05532; }
.avatar--s { background: #d9507c; }
.me { display: flex; align-items: center; gap: 14px; height: 64px; padding: 0 14px 0 8px; border-radius: 32px; background: #383838; }
.share { width: 108px; height: 64px; border-radius: 12px; background: var(--accent); font-weight: 600; }
.devmode { display: flex; align-items: center; width: 112px; height: 64px; padding: 8px; border-radius: 32px; background: var(--rule); }
.devmode input { position: absolute; opacity: 0; }
.knob { display: grid; place-items: center; width: 48px; height: 48px; border-radius: 50%; background: var(--panel); }
.knob svg { width: 32px; height: 24px; }
.present { display: flex; align-items: center; gap: 12px; margin-left: 34px; }
.play-icon { width: 24px; height: 28px; }
.zoom { display: flex; align-items: center; gap: 11px; margin-left: 22px; font-size: 23px; font-weight: 500; }

/* Layers panel */

.workspace { flex: 1; min-height: 0; display: grid; grid-template-columns: 482px 1fr 482px; }

.layers {
  display: flex;
  flex-direction: column;
  min-height: 0;
  color: #fff;
  background: var(--panel);
  border-right: 2px solid var(--rule);
}

.layers-head { display: flex; align-items: center; height: 80px; padding: 0 32px 0 36px; }
.layers-head .icon-btn { margin-right: 20px; color: #7d7d7d; }
.ptab { margin-right: 30px; font-weight: 600; color: #b3b3b3; }
.ptab--on { color: #fff; }
.page-pick { display: flex; align-items: center; gap: 9px; margin-left: auto; font-weight: 500; }
.page-pick .chev { color: #8c8c8c; }
.icon-btn svg { width: 24px; height: 24px; }
.icon-btn--white { color: #fff; }
.icon-btn .sliders { width: 26px; height: 28px; }

.layer {
  display: flex;
  align-items: center;
  gap: 20px;
  height: 64px;
  padding-left: 36px;
  font-weight: 500;
  font-variant-numeric: slashed-zero;
}

.layer svg { width: 24px; height: 24px; color: #8c8c8c; }
.layer--child { padding-left: 84px; }
.layer--frame { font-weight: 700; }
.layer--frame svg { color: #fff; }
.layer--sticky { flex: none; height: 64px; padding-bottom: 2px; border-bottom: 2px solid var(--rule); }
.layer-scroll { flex: 1; min-height: 0; overflow: hidden; }
.layer-list { margin-top: -8px; }

/* Canvas: frames and their nodes are freely placed design objects */

.canvas { position: relative; overflow: hidden; background: #f5f5f5; color: #000; }
.frame { position: absolute; width: 612px; height: 1327px; overflow: hidden; background: #fff; }
.frame-name { position: absolute; color: #b3b3b3; }
.node { position: absolute; white-space: nowrap; }

.title { font-size: 54px; line-height: 68px; font-weight: 800; }
.title--light { font-size: 56px; font-weight: 700; color: #fff; }
.t16 { font-size: 16px; line-height: 20px; }
.t23 { font-size: 23px; line-height: 28px; }
.t29 { font-size: 29px; line-height: 34px; font-weight: 700; }
.grey { color: #808080; }
.grey-dark { color: #6b6b6b; }
.underlined { text-decoration: underline; text-underline-offset: 6px; }

.gear { width: 46px; height: 46px; fill: #000; }
.burger { width: 48px; height: 38px; color: #000; }
.tri { width: 13px; height: 19px; color: #7f7f7f; }
.tri--left { transform: scaleX(-1); }

.legend { font-size: 23px; line-height: 32px; color: var(--blue); }
.legend li { display: flex; align-items: center; gap: 4px; }
.legend li::before { content: ""; width: 22px; height: 22px; border-radius: 50%; background: currentColor; }
.legend .legend-out { color: var(--deep); }

.chart { display: flex; align-items: flex-end; gap: 8px; height: 213px; }
.col { width: 18px; border-radius: 9px 9px 0 0; background: var(--blue); }
.col--out { background: var(--deep); }
.col--next { margin-left: 20px; }
.axis { width: 532px; height: 6px; }

.panel { width: 610px; height: 1110px; border-radius: 54px 54px 0 0; background: var(--blue); color: #fff; box-shadow: 0 4px 6px rgba(0, 0, 0, 0.25); }
.panel--flush { left: 0; width: 612px; box-shadow: none; }
.panel-title { font-family: Lato, sans-serif; font-size: 48px; line-height: 56px; }
.panel-title--inter { font-size: 46px; line-height: 56px; }
.week { font-family: "Open Sans", sans-serif; font-size: 22px; line-height: 28px; font-weight: 600; }
.week--small { font-size: 20px; }

hr { width: 100%; height: 2px; margin: 0; border: 0; background: #fff; }
.fill { display: block; height: 20px; margin-top: 11px; border-radius: 10px; background: #fff; }
.fill--big { height: 24px; margin-top: 9px; border-radius: 12px; }

.spend { display: grid; grid-template-columns: 1fr auto; width: 481px; align-items: start; }
.spend p { margin: 0 0 0 3px; height: 56px; padding-top: 8px; font: 400 34px/44px Lato, sans-serif; }
.spend b { margin-right: -9px; font-size: 23px; font-weight: 400; padding-top: 10px; }
.spend hr, .spend .fill { grid-column: 1 / -1; }
.spend .fill { margin-left: -6px; }
.spend.spend--high p { padding-top: 2px; margin-left: 8px; }
.spend--high b, .spend--second b { padding-top: 13px; }
.spend.spend--second p { margin-left: 0; }
.spend--high .fill, .spend--second .fill { margin-left: -11px; }

.wide-row { width: 481px; }
.wide-row p { display: flex; justify-content: space-between; height: 55px; font-size: 36px; line-height: 36px; font-weight: 300; }
.wide-row b { margin-right: -9px; font-size: 29px; font-weight: 400; }
.wide-row .fill { height: 24px; margin-top: 10px; margin-left: -9px; border-radius: 12px; }

.hero { width: 640px; height: 262px; border-radius: 0 0 57px 57px; background: var(--blue); box-shadow: 0 6px 6px rgba(0, 0, 0, 0.25); }
.board { width: 478px; height: 951px; border: 2px solid #222; background: #d9d9d9; }
.video { display: grid; place-items: center; width: 386px; height: 201px; padding-top: 4px; border: 2px solid #222; border-radius: 14px; background: #fff; box-shadow: 0 6px 6px rgba(0, 0, 0, 0.25); }
.video--b { padding: 0 0 0 18px; }
.play { width: 30px; height: 32px; }
.articles { width: 428px; height: 251px; padding: 20px 40px; border: 2px solid #222; border-radius: 14px; background: #fff; }
.articles ul { margin-top: 15px; font-size: 23px; line-height: 27px; }

.scroll-thumb { position: absolute; left: 398px; bottom: 10px; width: 369px; height: 12px; border-radius: 6px; background: #a6a6a6; }

/* Inspector */

.inspector { color: #b3b3b3; background: var(--panel); border-left: 2px solid var(--rule); }
.insp-tabs { display: flex; align-items: center; height: 82px; padding-left: 32px; border-bottom: 2px solid var(--rule); }
.inspector h3 { font-weight: 600; }
.insp-page { height: 162px; padding: 34px 36px 0 32px; border-bottom: 2px solid var(--rule); color: #fff; }
.fill-row { display: flex; align-items: center; margin-top: 34px; }
.swatch { width: 32px; height: 32px; border-radius: 2px; background: #f5f5f5; }
.hex { width: 130px; margin: 0 0 0 16px; }
.pct { width: 80px; margin: 0 auto 0 16px; }
.insp-row { display: flex; align-items: center; justify-content: space-between; height: 98px; padding: 0 36px 0 32px; border-bottom: 2px solid var(--rule); }

/* Floating over the editor */

.help { position: absolute; right: 49px; bottom: 48px; width: 64px; height: 64px; border-radius: 50%; background: #1e1e1e; color: #fff; font-size: 32px; }
.preview { position: absolute; right: 24px; bottom: 102px; padding: 9px; border-radius: 10px; background: #0f0f10; box-shadow: 0 4px 20px rgba(0, 0, 0, 0.5); }
.preview svg { width: 288px; height: 180px; overflow: hidden; }
.mini-title { font-size: 6px; font-weight: 800; }
.mini-sub { font-size: 5px; fill: #fff; }
```
